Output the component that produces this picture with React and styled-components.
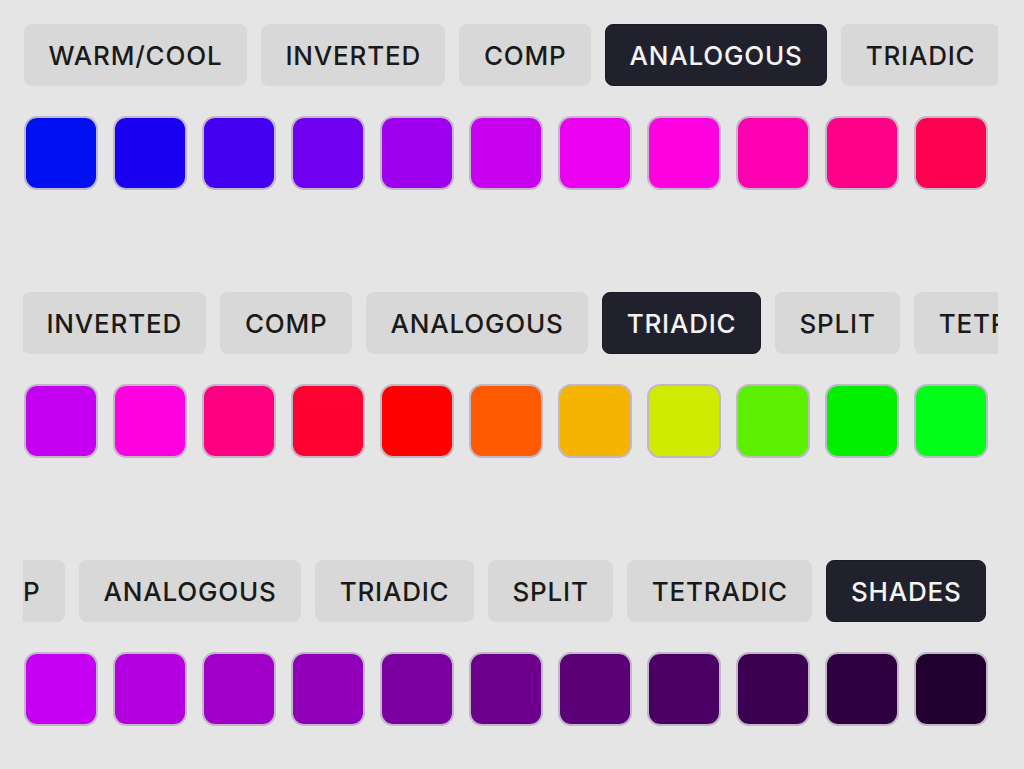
import React, { useLayoutEffect, useRef } from "react";
import styled, { createGlobalStyle } from "styled-components";

const GlobalStyle = createGlobalStyle`
  html, body {
    margin: 0;
    background: #e5e5e5;
  }
  body {
    font-family: Inter, "Noto Sans", "Liberation Sans", sans-serif;
  }
`;

const Page = styled.div`
  display: flex;
  flex-direction: column;
  gap: 102px;
  padding: 24px 0 0 23px;
  width: 975px;
`;

const Section = styled.section`
  display: flex;
  flex-direction: column;
  gap: 30px;
`;

const TabScroller = styled.div`
  position: relative;
  width: 975px;
  overflow: hidden;
`;

const TabTrack = styled.div`
  display: flex;
  gap: 14px;
  padding: 0 12px 0 1px;
  width: max-content;
`;

const Tab = styled.button`
  flex: none;
  height: 62px;
  padding: 0 23.5px;
  border-radius: 8px;
  border: 1px solid ${(p) => (p.$active ? "#1b1b26" : "transparent")};
  background: ${(p) => (p.$active ? "#21212e" : "#d8d8d8")};
  color: ${(p) => (p.$active ? "#f4f4f4" : "#1a1a1a")};
  font-family: Inter, "Noto Sans", "Liberation Sans", sans-serif;
  font-size: 26px;
  font-weight: 450;
  letter-spacing: 0.8px;
  cursor: pointer;
`;

const SwatchRow = styled.div`
  display: flex;
  gap: 15px;
  padding-left: 1px;
`;

const Swatch = styled.div`
  width: 74px;
  height: 74px;
  box-sizing: border-box;
  border-radius: 13px;
  border: 2px solid rgba(140, 118, 162, 0.42);
  background-clip: padding-box;
`;

const MODES = [
  "WARM/COOL",
  "INVERTED",
  "COMP",
  "ANALOGOUS",
  "TRIADIC",
  "SPLIT",
  "TETRADIC",
  "SHADES",
];

// scrollTo: name of the tab that sits at the left edge, or "end"
const SECTIONS = [
  {
    active: "ANALOGOUS",
    scrollTo: null,
    colors: [
      "#0010f0", "#1a00f0", "#4400f0", "#7000f0", "#a000f0", "#c800f0",
      "#ec00f0", "#ff00e0", "#ff00b0", "#ff0088", "#ff0050",
    ],
  },
  {
    active: "TRIADIC",
    scrollTo: "INVERTED",
    colors: [
      "#c400f0", "#ff00e0", "#ff0080", "#ff0030", "#ff0000", "#ff5a00",
      "#f5b400", "#d0ea00", "#5af000", "#00f000", "#00ff18",
    ],
  },
  {
    active: "SHADES",
    scrollTo: "end",
    colors: [
      "#c600f2", "#b400e0", "#a000c8", "#9000b8", "#7c00a0", "#6c008c",
      "#5c0078", "#4a0062", "#3c0050", "#2e0040", "#220030",
    ],
  },
];

const PaletteSection = ({ active, scrollTo, colors }) => {
  const scrollerRef = useRef(null);

  useLayoutEffect(() => {
    const el = scrollerRef.current;
    if (!el || !scrollTo) return;
    if (scrollTo === "end") {
      el.scrollLeft = el.scrollWidth - el.clientWidth;
    } else {
      const tab = el.querySelector(`[data-mode="${scrollTo}"]`);
      if (tab) el.scrollLeft = tab.offsetLeft + 1;
    }
  }, [scrollTo]);

  return (
    <Section>
      <TabScroller ref={scrollerRef}>
        <TabTrack>
          {MODES.map((m) => (
            <Tab key={m} data-mode={m} $active={m === active}>
              {m}
            </Tab>
          ))}
        </TabTrack>
      </TabScroller>
      <SwatchRow>
        {colors.map((c, i) => (
          <Swatch key={i} style={{ backgroundColor: c }} />
        ))}
      </SwatchRow>
    </Section>
  );
};

const App = () => (
  <>
    <GlobalStyle />
    <Page>
      {SECTIONS.map((s, i) => (
        <PaletteSection key={i} {...s} />
      ))}
    </Page>
  </>
);

export default App;
